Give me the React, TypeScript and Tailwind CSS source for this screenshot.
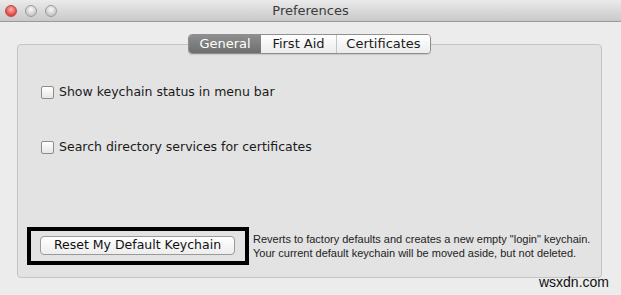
export default function App() {
  return (
    <div className="relative h-[295px] w-[621px] overflow-hidden bg-[#ececec] font-['DejaVu_Sans',sans-serif] text-[#1a1a1a]">
      {/* title bar */}
      <div className="relative flex h-[22px] items-center border-b border-[#9a9a9a] bg-gradient-to-b from-[#ebebeb] to-[#c9c9c9]">
        <div className="flex items-center gap-[8px] pl-[5px]">
          <span className="h-[12px] w-[12px] rounded-full border border-[#b94a4a] bg-[radial-gradient(circle_at_50%_35%,#ffb3b3,#e0433f_70%)]" />
          <span className="h-[12px] w-[12px] rounded-full border border-[#9c9c9c] bg-[radial-gradient(circle_at_50%_35%,#fafafa,#c4c4c4_75%)]" />
          <span className="h-[12px] w-[12px] rounded-full border border-[#9c9c9c] bg-[radial-gradient(circle_at_50%_35%,#fafafa,#c4c4c4_75%)]" />
        </div>
        <div className="absolute inset-0 flex items-center justify-center text-[13px] text-[#3a3a3a]">
          Preferences
        </div>
      </div>

      <div className="px-[17px] pt-[12px]">
        {/* tabs */}
        <div className="relative z-10 flex pl-[171px]">
          <div className="flex h-[20px] overflow-hidden rounded-[4px] border border-[#8f8f8f] text-[13px] shadow-[0_1px_1px_rgba(0,0,0,0.12)]">
            <div className="flex w-[72px] items-center justify-center bg-gradient-to-b from-[#8e8e8e] to-[#6e6e6e] text-white">
              General
            </div>
            <div className="flex w-[76px] items-center justify-center border-r border-[#c4c4c4] bg-gradient-to-b from-white to-[#ececec]">
              First Aid
            </div>
            <div className="flex w-[93px] items-center justify-center bg-gradient-to-b from-white to-[#ececec]">
              Certificates
            </div>
          </div>
        </div>

        {/* group box */}
        <div className="-mt-[10px] flex h-[234px] w-[585px] flex-col rounded-[4px] border border-[#c4c4c4] bg-[#e3e3e3] pl-[23px] pt-[39px]">
          <label className="flex h-[16px] items-center gap-[5px] text-[12.5px]">
            <span className="h-[13px] w-[13px] rounded-[2px] border border-[#8d8d8d] bg-gradient-to-b from-white to-[#e6e6e6]" />
            Show keychain status in menu bar
          </label>
          <label className="mt-[39px] flex h-[16px] items-center gap-[5px] text-[12.5px]">
            <span className="h-[13px] w-[13px] rounded-[2px] border border-[#8d8d8d] bg-gradient-to-b from-white to-[#e6e6e6]" />
            Search directory services for certificates
          </label>

          <div className="mt-[72px] -ml-[14px] flex items-center gap-[4px]">
            <div className="border-[4px] border-black pb-[6px] pl-[9px] pr-[10px] pt-[5px]">
              <button
                type="button"
                className="flex h-[19px] w-[195px] items-center justify-center rounded-[4px] border border-[#9a9a9a] bg-gradient-to-b from-white to-[#ededed] text-[12.5px] text-[#111]"
              >
                Reset My Default Keychain
              </button>
            </div>
            <div className="whitespace-nowrap font-['Liberation_Sans',sans-serif] text-[11px] leading-[14px] text-[#222]">
              <div>Reverts to factory defaults and creates a new empty "login" keychain.</div>
              <div>Your current default keychain will be moved aside, but not deleted.</div>
            </div>
          </div>
        </div>
      </div>

      <div className="absolute bottom-[2px] right-[12px] font-['Liberation_Sans',sans-serif] text-[14px] text-[#111]">
        wsxdn.com
      </div>
    </div>
  );
}
